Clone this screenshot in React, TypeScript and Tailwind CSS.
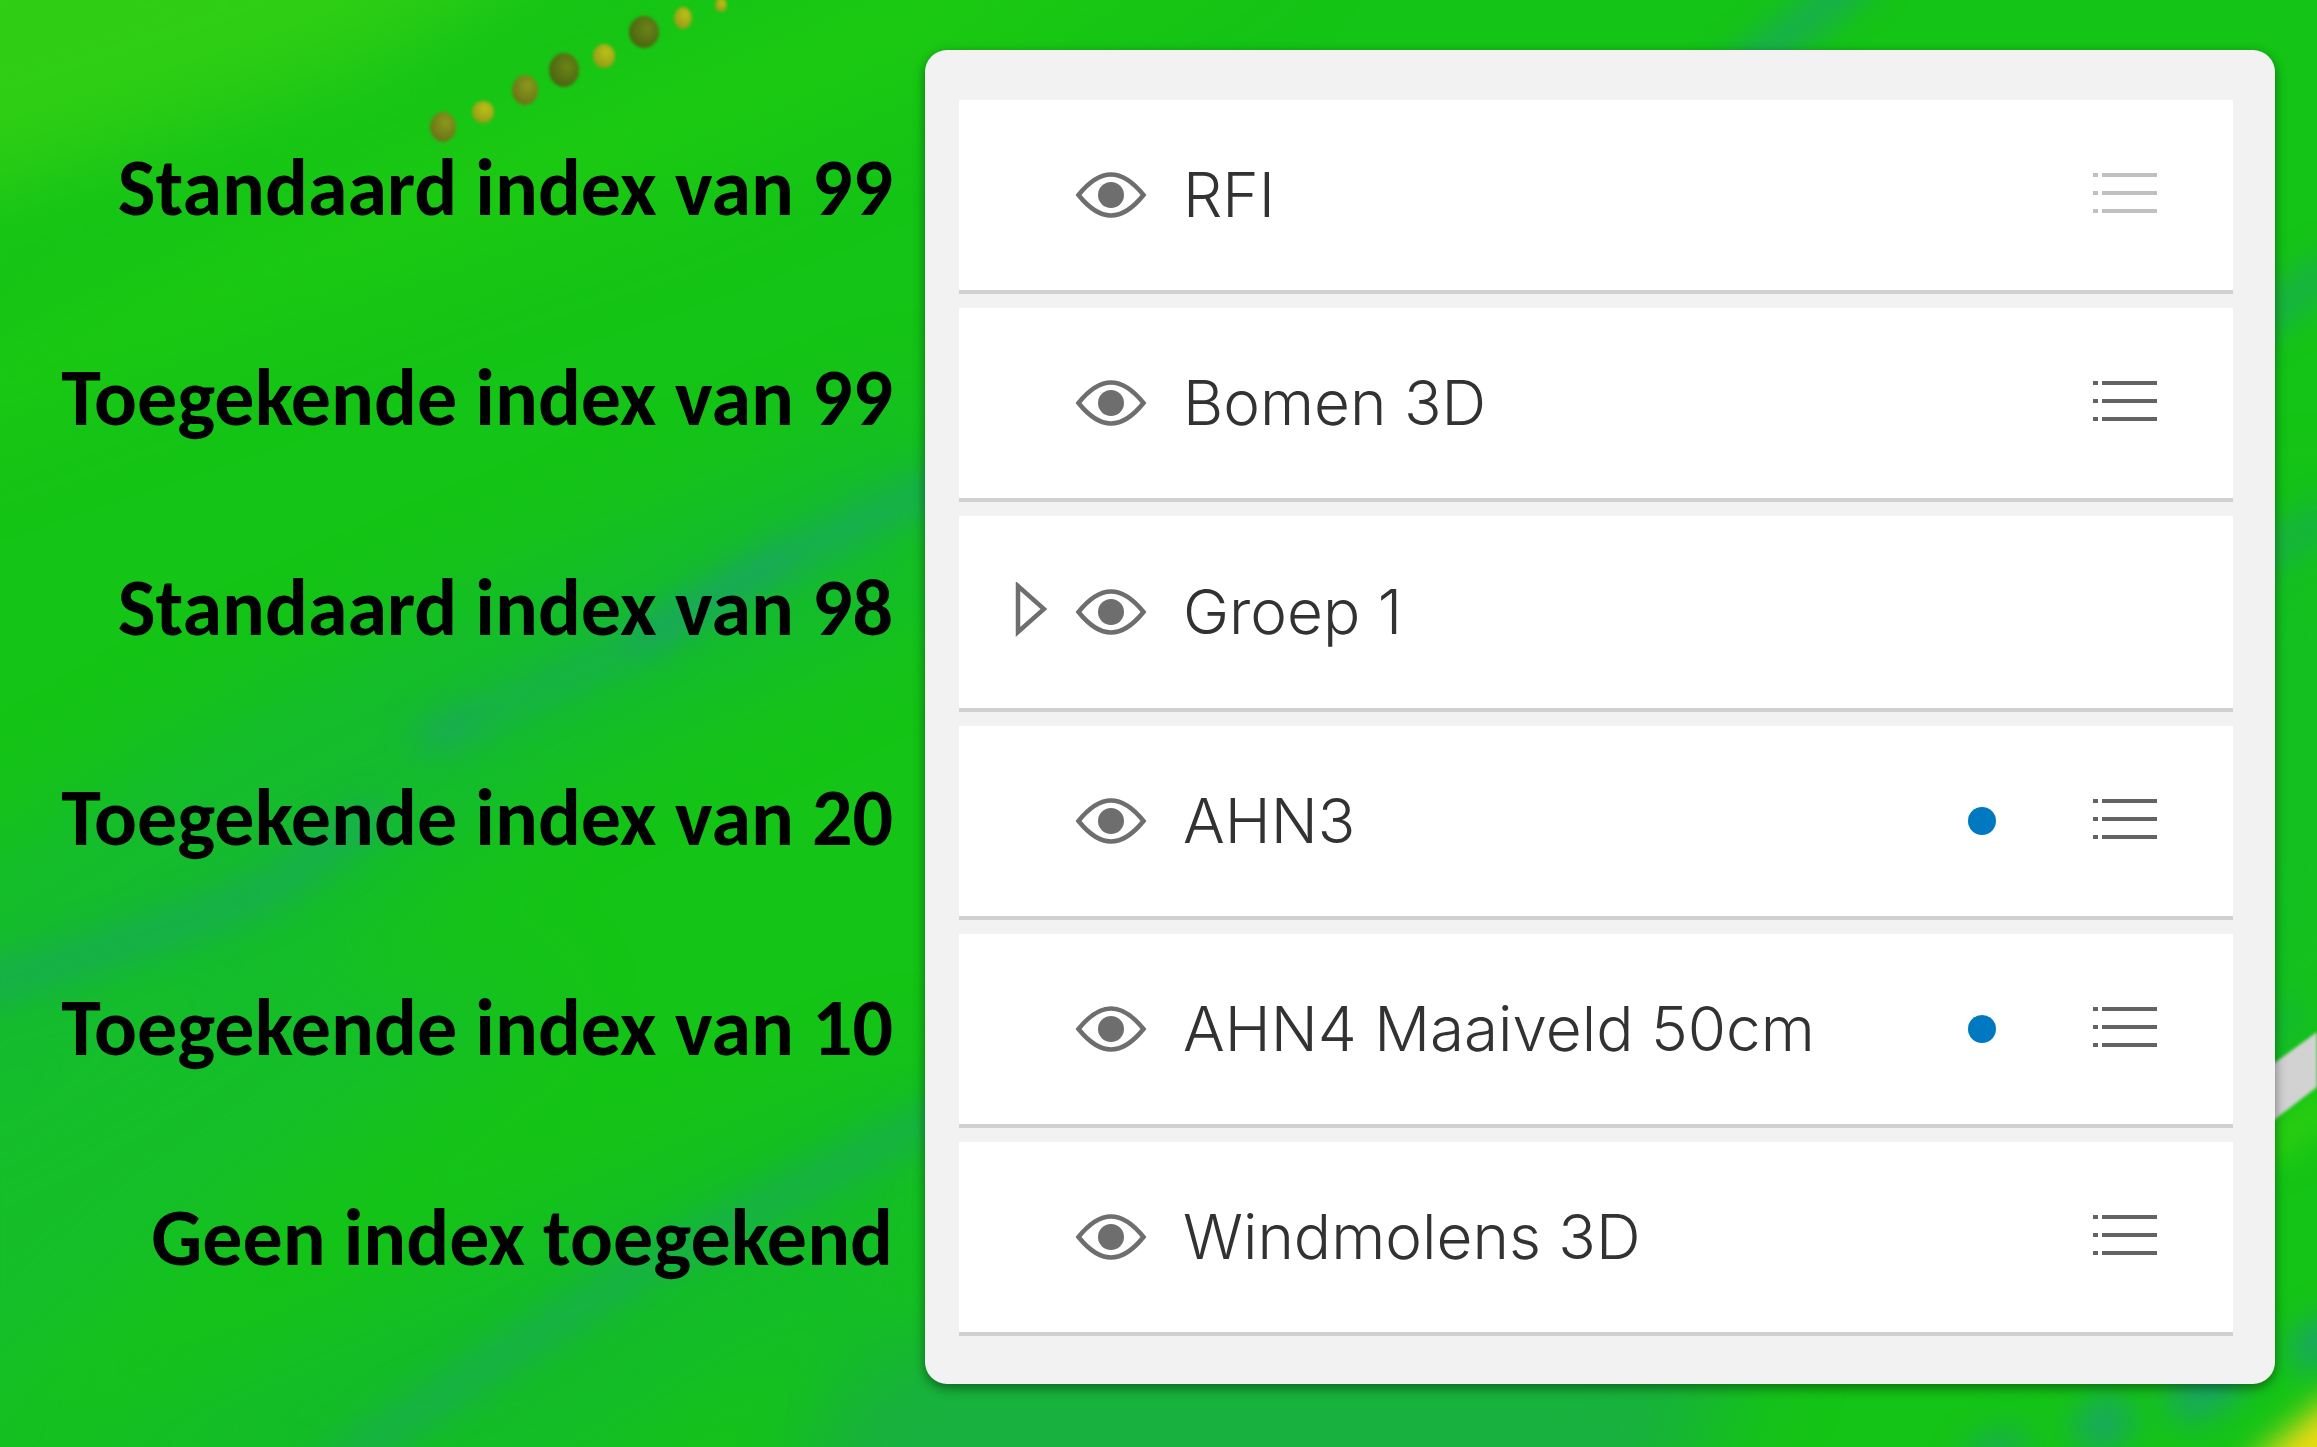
type Layer = {
    name: string;
    label: string;
    group?: boolean;
    legend?: "on" | "off";
    changed?: boolean;
};

const layers: Layer[] = [
    { name: "RFI", label: "Standaard index van 99", legend: "off" },
    { name: "Bomen 3D", label: "Toegekende index van 99", legend: "on" },
    { name: "Groep 1", label: "Standaard index van 98", group: true },
    { name: "AHN3", label: "Toegekende index van 20", legend: "on", changed: true },
    { name: "AHN4 Maaiveld 50cm", label: "Toegekende index van 10", legend: "on", changed: true },
    { name: "Windmolens 3D", label: "Geen index toegekend", legend: "on" },
];

const trees = [
    { x: 443, y: 127, rx: 13, ry: 15, fill: "url(#treeOlive)" },
    { x: 483, y: 112, rx: 11, ry: 11, fill: "url(#treeYellow)" },
    { x: 525, y: 90, rx: 13, ry: 15, fill: "url(#treeOlive)" },
    { x: 564, y: 70, rx: 15, ry: 17, fill: "url(#treeDark)" },
    { x: 604, y: 56, rx: 11, ry: 12, fill: "url(#treeYellow)" },
    { x: 644, y: 32, rx: 15, ry: 16, fill: "url(#treeDark)" },
    { x: 683, y: 18, rx: 9, ry: 11, fill: "url(#treeYellow)" },
    { x: 721, y: 5, rx: 6, ry: 7, fill: "url(#treeYellow)" },
];

function HeightMap() {
    return (
        <svg className="absolute inset-0 -z-10 h-full w-full" viewBox="0 0 2317 1447" preserveAspectRatio="xMidYMid slice" aria-hidden="true">
            <defs>
                <filter id="soft" x="-20%" y="-20%" width="140%" height="140%" colorInterpolationFilters="sRGB">
                    <feGaussianBlur stdDeviation="16" />
                </filter>
                <filter id="wide" x="-30%" y="-30%" width="160%" height="160%" colorInterpolationFilters="sRGB">
                    <feGaussianBlur stdDeviation="45" />
                </filter>
                <filter id="edge" colorInterpolationFilters="sRGB">
                    <feGaussianBlur stdDeviation="1.5" />
                </filter>
                <radialGradient id="treeOlive" cx="0.6" cy="0.35" r="0.7">
                    <stop offset="0" stopColor="#8a991c" />
                    <stop offset="1" stopColor="#6a7016" />
                </radialGradient>
                <radialGradient id="treeDark" cx="0.6" cy="0.4" r="0.7">
                    <stop offset="0" stopColor="#6c8418" />
                    <stop offset="1" stopColor="#46600f" />
                </radialGradient>
                <radialGradient id="treeYellow" cx="0.6" cy="0.35" r="0.7">
                    <stop offset="0" stopColor="#bcc018" />
                    <stop offset="1" stopColor="#929a14" />
                </radialGradient>
            </defs>
            <rect width="2317" height="1447" fill="#14c416" />
            <g filter="url(#wide)">
                <path d="M-100 -100H640L360 70L-100 220Z" fill="#34d014" opacity="0.85" />
                <path d="M-100 380L300 190L900 -60H1300L700 190L-100 460Z" fill="#1eca12" opacity="0.8" />
                <path d="M-100 900L240 700L460 600L940 400V600L560 780L400 900L-100 1160Z" fill="#16b838" opacity="0.7" />
                <path d="M-100 1100L300 950L560 1000L200 1250L-100 1500Z" fill="#16bc30" opacity="0.7" />
                <path d="M-100 1500L500 1240L940 1060V1260L560 1500Z" fill="#14b834" opacity="0.6" />
                <path d="M860 1340H1760L1640 1540H760Z" fill="#18b040" />
                <path d="M2240 560L2340 500V940L2240 1060Z" fill="#14be24" />
            </g>
            <g filter="url(#soft)" stroke="#1aa46c" strokeLinecap="round" fill="none">
                <path d="M-30 990L90 955L260 895L370 820" strokeWidth="40" opacity="0.5" />
                <path d="M430 738L560 680L650 636L760 570L950 480" strokeWidth="40" opacity="0.4" />
                <path d="M640 640L780 560" strokeWidth="24" opacity="0.55" stroke="#1b9880" />
                <path d="M780 560L950 480" strokeWidth="30" opacity="0.35" />
                <path d="M440 735L470 722" strokeWidth="22" opacity="0.6" />
                <path d="M330 1470L450 1390L640 1270L950 1110" strokeWidth="40" opacity="0.45" />
                <path d="M1740 70L1860 -20" strokeWidth="30" opacity="0.8" />
                <path d="M2260 322L2330 270" strokeWidth="34" opacity="0.6" />
                <path d="M2260 556L2330 516" strokeWidth="34" opacity="0.5" />
                <path d="M2250 1045L2290 1015" strokeWidth="30" opacity="0.4" />
                <path d="M1980 1460L2010 1445" strokeWidth="36" opacity="0.7" />
                <path d="M2098 1428L2110 1420" strokeWidth="48" opacity="0.9" />
                <path d="M2190 1400L2220 1382" strokeWidth="46" opacity="0.9" />
                <path d="M2310 1350L2330 1335" strokeWidth="40" />
                <path d="M2270 1146L2330 1104" strokeWidth="30" stroke="#30d010" />
                <path d="M2275 1480L2340 1425" strokeWidth="56" stroke="#f0dc14" />
            </g>
            <path d="M2240 1088L2317 1032V1087L2240 1146Z" fill="#d2d2d2" filter="url(#edge)" />
            <g filter="url(#edge)">
                {trees.map((t) => (
                    <ellipse key={t.x} cx={t.x} cy={t.y} rx={t.rx} ry={t.ry} fill={t.fill} />
                ))}
            </g>
        </svg>
    );
}

function EyeIcon() {
    return (
        <svg className="h-12 w-[72px]" viewBox="0 0 72 48" fill="none" aria-hidden="true">
            <path d="M3.5 24C14 11 25 3.500 36 3.500S58 11 68.500 24C58 37 47 44.500 36 44.500S14 37 3.500 24Z" stroke="#6e6e6e" strokeWidth="4.500" />
            <circle cx="36" cy="24" r="13" fill="#6e6e6e" />
        </svg>
    );
}

function ExpandIcon() {
    return (
        <svg className="h-[60px] w-8" viewBox="0 0 32 60" fill="none" aria-hidden="true">
            <path d="M3 4V50L29 27Z" stroke="#6e6e6e" strokeWidth="4.500" />
        </svg>
    );
}

function LegendIcon() {
    return (
        <svg className="h-12 w-[66px]" viewBox="0 0 66 48" fill="#636363" aria-hidden="true">
            {[2, 20, 38].map((y) => (
                <g key={y}>
                    <rect x="1" y={y} width="5" height="4" />
                    <rect x="10" y={y} width="55" height="4" />
                </g>
            ))}
        </svg>
    );
}

function LayerRow({ layer }: { layer: Layer }) {
    return (
        <li className={`flex items-center border-b-4 border-[#d0d0d0] bg-white pl-14 pr-[75px] ${layer.group ? "h-[196px]" : "h-[194px]"}`}>
            <div className="w-8 shrink-0">
                {layer.group && (
                    <button type="button" className="block" aria-label={`${layer.name} uitklappen`}>
                        <ExpandIcon />
                    </button>
                )}
            </div>
            <button type="button" className="ml-7 shrink-0" aria-label={`${layer.name} tonen of verbergen`}>
                <EyeIcon />
            </button>
            <span className="ml-9 flex-1 whitespace-nowrap font-['Inter',sans-serif] text-[62px] leading-[76px] font-light text-[#323232]">{layer.name}</span>
            {layer.changed && <span className="mr-24 size-7 shrink-0 rounded-full bg-[#0079c1]" />}
            {layer.legend && (
                <button type="button" disabled={layer.legend === "off"} className="shrink-0 disabled:opacity-40" aria-label={`Legenda ${layer.name}`}>
                    <LegendIcon />
                </button>
            )}
        </li>
    );
}

export default function App() {
    return (
        <main className="relative isolate grid min-h-screen grid-cols-[925px_minmax(0,1fr)] items-start overflow-hidden pr-[42px]">
            <HeightMap />
            <ul className="pt-[83px] pr-8 text-right font-['Carlito',sans-serif] text-[80px] leading-[210px] font-bold whitespace-nowrap text-black">
                {layers.map((layer) => (
                    <li key={layer.name}>{layer.label}</li>
                ))}
            </ul>
            <section className="mt-[50px] rounded-[22px] bg-[#f2f2f2] pt-[50px] pr-[42px] pb-12 pl-[34px] shadow-[0_4px_12px_rgba(0,0,0,0.45)]">
                <ul className="flex flex-col gap-[14px]">
                    {layers.map((layer) => (
                        <LayerRow key={layer.name} layer={layer} />
                    ))}
                </ul>
            </section>
        </main>
    );
}
